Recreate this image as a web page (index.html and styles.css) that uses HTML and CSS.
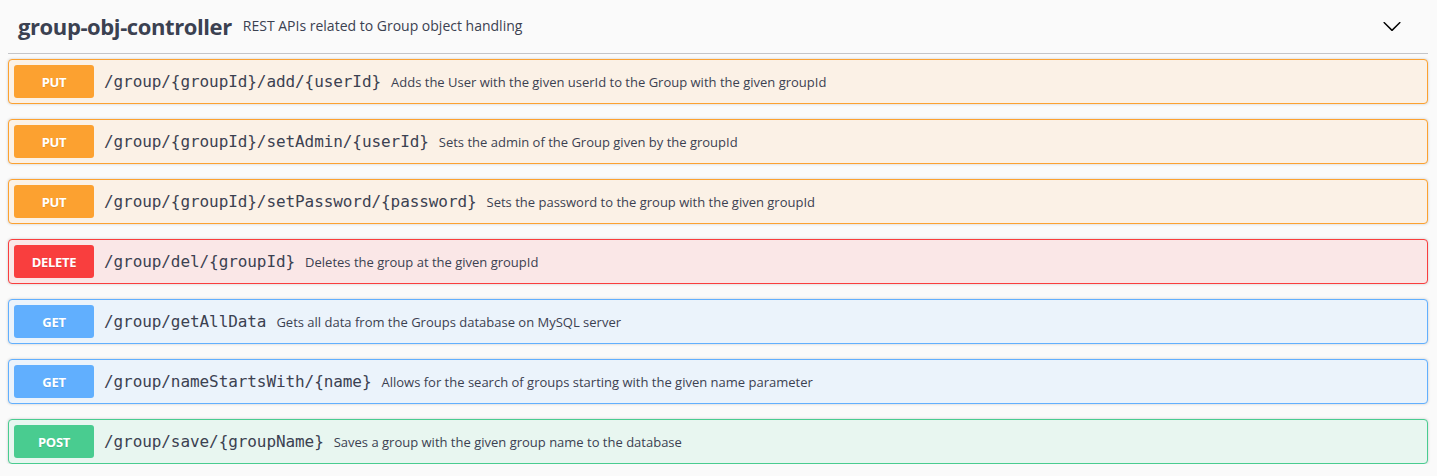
FILE: index.html
```html
<!DOCTYPE html>
<html lang="en">
<head>
<meta charset="utf-8">
<title>group-obj-controller</title>
<link rel="stylesheet" href="styles.css">
</head>
<body>
<section class="tag-section">
  <h4 class="tag-header">
    <span class="tag-name">group-obj-controller</span>
    <small class="tag-desc">REST APIs related to Group object handling</small>
    <button class="expand" aria-label="collapse">
      <svg width="20" height="20" viewBox="0 0 20 20"><path d="M17.418 6.109c.272-.268.709-.268.979 0s.271.701 0 .969l-7.908 7.83c-.27.268-.707.268-.979 0l-7.908-7.83c-.27-.268-.27-.701 0-.969.271-.268.709-.268.979 0L10 13.25l7.418-7.141z"/></svg>
    </button>
  </h4>
  <div class="ops">
    <div class="op op-put">
      <span class="method">PUT</span>
      <span class="path">/group/{groupId}/add/{userId}</span>
      <span class="desc">Adds the User with the given userId to the Group with the given groupId</span>
    </div>
    <div class="op op-put">
      <span class="method">PUT</span>
      <span class="path">/group/{groupId}/setAdmin/{userId}</span>
      <span class="desc">Sets the admin of the Group given by the groupId</span>
    </div>
    <div class="op op-put">
      <span class="method">PUT</span>
      <span class="path">/group/{groupId}/setPassword/{password}</span>
      <span class="desc">Sets the password to the group with the given groupId</span>
    </div>
    <div class="op op-delete">
      <span class="method">DELETE</span>
      <span class="path">/group/del/{groupId}</span>
      <span class="desc">Deletes the group at the given groupId</span>
    </div>
    <div class="op op-get">
      <span class="method">GET</span>
      <span class="path">/group/getAllData</span>
      <span class="desc">Gets all data from the Groups database on MySQL server</span>
    </div>
    <div class="op op-get">
      <span class="method">GET</span>
      <span class="path">/group/nameStartsWith/{name}</span>
      <span class="desc">Allows for the search of groups starting with the given name parameter</span>
    </div>
    <div class="op op-post">
      <span class="method">POST</span>
      <span class="path">/group/save/{groupName}</span>
      <span class="desc">Saves a group with the given group name to the database</span>
    </div>
  </div>
</section>
</body>
</html>
```
FILE: styles.css
```css
html, body {
  margin: 0;
  padding: 0;
  background: #fafafa;
}
body {
  padding: 0 9px 0 8px;
  font-family: "Open Sans", "DejaVu Sans", sans-serif;
  color: #3b4151;
}
.tag-header {
  display: flex;
  align-items: center;
  box-sizing: border-box;
  height: 54px;
  margin: 0;
  padding: 0 26px 2px 10px;
  border-bottom: 1px solid #c4c5c9;
}
.tag-name {
  font-family: "Open Sans", sans-serif;
  font-size: 22px;
  font-weight: 700;
  letter-spacing: -0.4px;
  color: #3b4151;
}
.tag-desc {
  flex: 1;
  padding: 0 11px;
  font-size: 14px;
  font-weight: 400;
  color: #3b4151;
}
.expand {
  display: flex;
  border: none;
  background: transparent;
  padding: 0;
  margin: 0;
  cursor: pointer;
}
.expand svg {
  width: 20px;
  height: 20px;
  fill: #000;
}
.ops {
  display: flex;
  flex-direction: column;
  gap: 15px;
  padding-top: 5px;
}
.op {
  display: flex;
  align-items: center;
  box-sizing: border-box;
  height: 45px;
  padding: 0 5px;
  border: 1px solid;
  border-radius: 4px;
  box-shadow: 0 0 3px rgba(0, 0, 0, .19);
}
.method {
  box-sizing: border-box;
  width: 80px;
  height: 33px;
  display: flex;
  align-items: center;
  justify-content: center;
  border-radius: 3px;
  color: #fff;
  font-size: 13px;
  font-weight: 700;
  letter-spacing: -0.3px;
  text-shadow: 0 1px 0 rgba(0, 0, 0, .1);
}
.path {
  padding: 0 10px 0 10px;
  font-family: "DejaVu Sans Mono", "Liberation Mono", monospace;
  font-size: 16px;
  letter-spacing: -0.08px;
  color: #3b4151;
}
.desc {
  font-size: 13px;
  color: #3b4151;
}
.op-put { background: #fbf1e6; border-color: #fca130; }
.op-put .method { background: #fca130; }
.op-delete { background: #fae7e7; border-color: #f93e3e; }
.op-delete .method { background: #f93e3e; }
.op-get { background: #ebf3fb; border-color: #61affe; }
.op-get .method { background: #61affe; }
.op-post { background: #e8f6f0; border-color: #49cc90; }
.op-post .method { background: #49cc90; }
```
